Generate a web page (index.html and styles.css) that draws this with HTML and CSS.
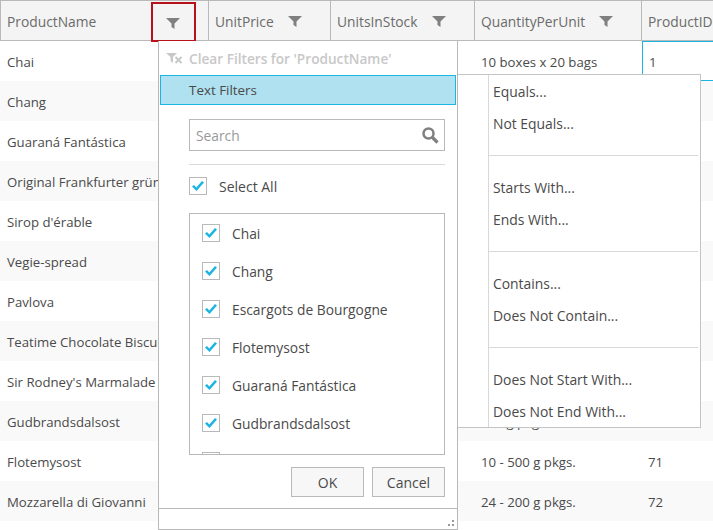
FILE: index.html
```html
<!DOCTYPE html>
<html lang="en">
<head>
  <meta charset="UTF-8">
  <title>Grid filtering</title>
  <link rel="stylesheet" href="styles.css">
</head>
<body>
  <svg class="defs" width="0" height="0">
    <symbol id="funnel" viewBox="0 0 14 11"><path d="M0 0H14L8.500 5.500V11L5.500 9V5.500Z"/></symbol>
    <symbol id="tick" viewBox="0 0 14 12"><path d="M1 6.500L5.500 11L13 2.500L11 1L5.300 7.500L3 5Z"/></symbol>
  </svg>

  <div class="grid">
    <div class="row head">
      <div class="cell c1">ProductName<span class="filter-btn"><svg class="funnel"><use href="#funnel"/></svg></span></div>
      <div class="cell c2">UnitPrice<svg class="funnel"><use href="#funnel"/></svg></div>
      <div class="cell c3">UnitsInStock<svg class="funnel"><use href="#funnel"/></svg></div>
      <div class="cell c4">QuantityPerUnit<svg class="funnel"><use href="#funnel"/></svg></div>
      <div class="cell c5">ProductID</div>
    </div>
    <div class="row"><div class="cell c1">Chai</div><div class="cell c2"></div><div class="cell c3"></div><div class="cell c4">10 boxes x 20 bags</div><div class="cell c5 current">1</div></div>
    <div class="row alt"><div class="cell c1">Chang</div><div class="cell c2"></div><div class="cell c3"></div><div class="cell c4"></div><div class="cell c5"></div></div>
    <div class="row"><div class="cell c1">Guaraná Fantástica</div><div class="cell c2"></div><div class="cell c3"></div><div class="cell c4"></div><div class="cell c5"></div></div>
    <div class="row alt"><div class="cell c1">Original Frankfurter grüne Soße</div><div class="cell c2"></div><div class="cell c3"></div><div class="cell c4"></div><div class="cell c5"></div></div>
    <div class="row"><div class="cell c1">Sirop d'érable</div><div class="cell c2"></div><div class="cell c3"></div><div class="cell c4"></div><div class="cell c5"></div></div>
    <div class="row alt"><div class="cell c1">Vegie-spread</div><div class="cell c2"></div><div class="cell c3"></div><div class="cell c4"></div><div class="cell c5"></div></div>
    <div class="row"><div class="cell c1">Pavlova</div><div class="cell c2"></div><div class="cell c3"></div><div class="cell c4"></div><div class="cell c5"></div></div>
    <div class="row alt"><div class="cell c1">Teatime Chocolate Biscuits</div><div class="cell c2"></div><div class="cell c3"></div><div class="cell c4"></div><div class="cell c5"></div></div>
    <div class="row"><div class="cell c1">Sir Rodney's Marmalade</div><div class="cell c2"></div><div class="cell c3"></div><div class="cell c4"></div><div class="cell c5"></div></div>
    <div class="row alt"><div class="cell c1">Gudbrandsdalsost</div><div class="cell c2"></div><div class="cell c3"></div><div class="cell c4">10 kg pkg.</div><div class="cell c5"></div></div>
    <div class="row"><div class="cell c1">Flotemysost</div><div class="cell c2"></div><div class="cell c3"></div><div class="cell c4">10 - 500 g pkgs.</div><div class="cell c5">71</div></div>
    <div class="row alt"><div class="cell c1">Mozzarella di Giovanni</div><div class="cell c2"></div><div class="cell c3"></div><div class="cell c4">24 - 200 g pkgs.</div><div class="cell c5">72</div></div>
  </div>

  <div class="popup">
    <div class="clear-row">
      <svg class="clear-icon" viewBox="0 0 17 11"><path d="M0 0H11L7 4V10L4.500 8V4Z"/><path class="clear-x" d="M9.500 4L15.500 10M15.500 4L9.500 10"/></svg>
      <span>Clear Filters for 'ProductName'</span>
    </div>
    <div class="text-filters">Text Filters</div>
    <div class="popup-body">
      <div class="search">
        <span>Search</span>
        <svg class="search-icon" viewBox="0 0 17 17"><circle cx="6.500" cy="6.500" r="5"/><path class="search-handle" d="M10.500 10.500L15.500 15.500"/></svg>
      </div>
      <div class="select-all">
        <span class="check"><svg><use href="#tick"/></svg></span>
        <span>Select All</span>
      </div>
      <div class="list">
        <div class="list-item"><span class="check"><svg><use href="#tick"/></svg></span>Chai</div>
        <div class="list-item"><span class="check"><svg><use href="#tick"/></svg></span>Chang</div>
        <div class="list-item"><span class="check"><svg><use href="#tick"/></svg></span>Escargots de Bourgogne</div>
        <div class="list-item"><span class="check"><svg><use href="#tick"/></svg></span>Flotemysost</div>
        <div class="list-item"><span class="check"><svg><use href="#tick"/></svg></span>Guaraná Fantástica</div>
        <div class="list-item"><span class="check"><svg><use href="#tick"/></svg></span>Gudbrandsdalsost</div>
        <div class="list-item"><span class="check"></span></div>
      </div>
      <div class="buttons">
        <button class="btn">OK</button>
        <button class="btn">Cancel</button>
      </div>
    </div>
    <div class="grip"></div>
  </div>

  <div class="submenu">
    <div class="menu-group"><div class="menu-item">Equals...</div><div class="menu-item">Not Equals...</div></div>
    <div class="menu-group"><div class="menu-item">Starts With...</div><div class="menu-item">Ends With...</div></div>
    <div class="menu-group"><div class="menu-item">Contains...</div><div class="menu-item">Does Not Contain...</div></div>
    <div class="menu-group"><div class="menu-item">Does Not Start With...</div><div class="menu-item">Does Not End With...</div></div>
  </div>
</body>
</html>
```

FILE: styles.css
```css
html, body {
  margin: 0;
  height: 530px;
  overflow: hidden;
}
body {
  font-family: 'Open Sans', 'Noto Sans', sans-serif;
  font-size: 13.2px;
  color: #4a4a4a;
  background: #fff;
  position: relative;
}
.defs {
  position: absolute;
}
.row {
  display: flex;
  height: 40px;
}
.row.alt {
  background: #f9f9f9;
}
.row.head {
  height: 39px;
  background: #f4f4f4;
  border-top: 1px solid #b9b9b9;
  border-bottom: 1px solid #b9b9b9;
  color: #6b6b6b;
  font-size: 13.8px;
}
.cell {
  box-sizing: border-box;
  display: flex;
  align-items: center;
  white-space: nowrap;
  overflow: hidden;
  padding: 1px 0 0 6px;
}
.head .cell {
  border-right: 1px solid #b9b9b9;
}
.head .cell.c1 {
  border-left: 1px solid #b9b9b9;
  padding-left: 6px;
  overflow: visible;
}
.c1 { width: 209px; padding-left: 7px; }
.c2 { width: 122px; }
.c3 { width: 144px; }
.c4 { width: 167px; }
.c5 { width: 71px; }
.head .c5 {
  border-right: 0;
}
.cell.current {
  border: 1px solid #1cb5e2;
  border-right: 0;
  padding-left: 6px;
}
.funnel {
  width: 14px;
  height: 11px;
  fill: #808080;
  margin: 1px 28px 0 auto;
  flex: none;
}
.filter-btn {
  box-sizing: border-box;
  width: 45px;
  height: 40px;
  margin: 0 12px 0 auto;
  padding-right: 1px;
  align-self: flex-start;
  border: 2px solid #b5121b;
  display: flex;
  align-items: center;
  justify-content: center;
  flex: none;
}
.filter-btn .funnel {
  margin: 2px 0 0;
}

/* filter dropdown */
.popup {
  position: absolute;
  left: 158px;
  top: 41px;
  box-sizing: border-box;
  width: 300px;
  height: 489px;
  background: #fff;
  border: 1px solid #b9b9b9;
  border-top: 0;
  display: flex;
  flex-direction: column;
  font-size: 13.8px;
}
.clear-row {
  height: 34px;
  flex: none;
  display: flex;
  align-items: center;
  color: #c8c8c8;
  font-weight: 600;
  font-size: 13.65px;
  padding-left: 7px;
}
.clear-icon {
  width: 17px;
  height: 11px;
  fill: #c8c8c8;
  margin-right: 6px;
}
.clear-x {
  fill: none;
  stroke: #c8c8c8;
  stroke-width: 2;
}
.text-filters {
  box-sizing: border-box;
  height: 30px;
  margin: 0 1px;
  background: #b0e1f0;
  border: 1px solid #1cb5e2;
  padding-left: 28px;
  line-height: 28px;
  font-size: 13.4px;
  flex: none;
}
.popup-body {
  flex: 1;
  padding: 14px 12px 0 30px;
  display: flex;
  flex-direction: column;
}
.search {
  box-sizing: border-box;
  height: 32px;
  border: 1px solid #b9b9b9;
  display: flex;
  align-items: center;
  justify-content: space-between;
  padding: 0 5px 0 6px;
  color: #999;
  flex: none;
}
.search-icon {
  width: 17px;
  height: 17px;
  fill: none;
  stroke: #808080;
  stroke-width: 2.500;
}
.search-handle {
  stroke-width: 3.200;
}
.select-all {
  box-sizing: border-box;
  margin-top: 13px;
  padding-top: 12px;
  height: 49px;
  border-top: 1px solid #d8d8d8;
  display: flex;
  align-items: flex-start;
  gap: 12px;
  font-size: 14px;
  flex: none;
}
.check {
  box-sizing: border-box;
  width: 18px;
  height: 18px;
  border: 1px solid #b9b9b9;
  background: #fff;
  display: flex;
  align-items: center;
  justify-content: center;
  flex: none;
}
.check svg {
  width: 14px;
  height: 12px;
  fill: #1cb5e2;
}
.list {
  box-sizing: border-box;
  height: 242px;
  border: 1px solid #b9b9b9;
  overflow: hidden;
  flex: none;
}
.list-item {
  height: 38px;
  display: flex;
  align-items: center;
  gap: 12px;
  padding-left: 12px;
}
.buttons {
  display: flex;
  justify-content: flex-end;
  gap: 8px;
  margin-top: 12px;
}
.btn {
  box-sizing: border-box;
  width: 73px;
  height: 30px;
  padding: 0;
  background: #f7f7f7;
  border: 1px solid #b9b9b9;
  font: inherit;
  font-size: 14px;
  color: #4a4a4a;
}
.grip {
  height: 20px;
  border-top: 1px solid #b9b9b9;
  flex: none;
  position: relative;
}
.grip::after {
  content: "";
  position: absolute;
  right: 3px;
  bottom: 3px;
  width: 6px;
  height: 6px;
  background:
    linear-gradient(#999, #999) 4px 4px / 2px 2px no-repeat,
    linear-gradient(#999, #999) 0 4px / 2px 2px no-repeat,
    linear-gradient(#999, #999) 4px 0 / 2px 2px no-repeat;
}

/* text filter submenu */
.submenu {
  position: absolute;
  left: 458px;
  top: 74px;
  box-sizing: border-box;
  width: 243px;
  height: 354px;
  background: #fff;
  border: 1px solid #c4c4c4;
  border-left: 0;
  padding: 1px 2px 0 30px;
  font-size: 13.9px;
}
.submenu::before {
  content: "";
  position: absolute;
  left: 30px;
  top: 0;
  bottom: 0;
  border-left: 1px solid #d8d8d8;
}
.menu-group + .menu-group {
  margin-top: 15px;
  padding-top: 16px;
  border-top: 1px solid #d8d8d8;
}
.menu-item {
  height: 32px;
  line-height: 32px;
  padding-left: 5px;
}
```
